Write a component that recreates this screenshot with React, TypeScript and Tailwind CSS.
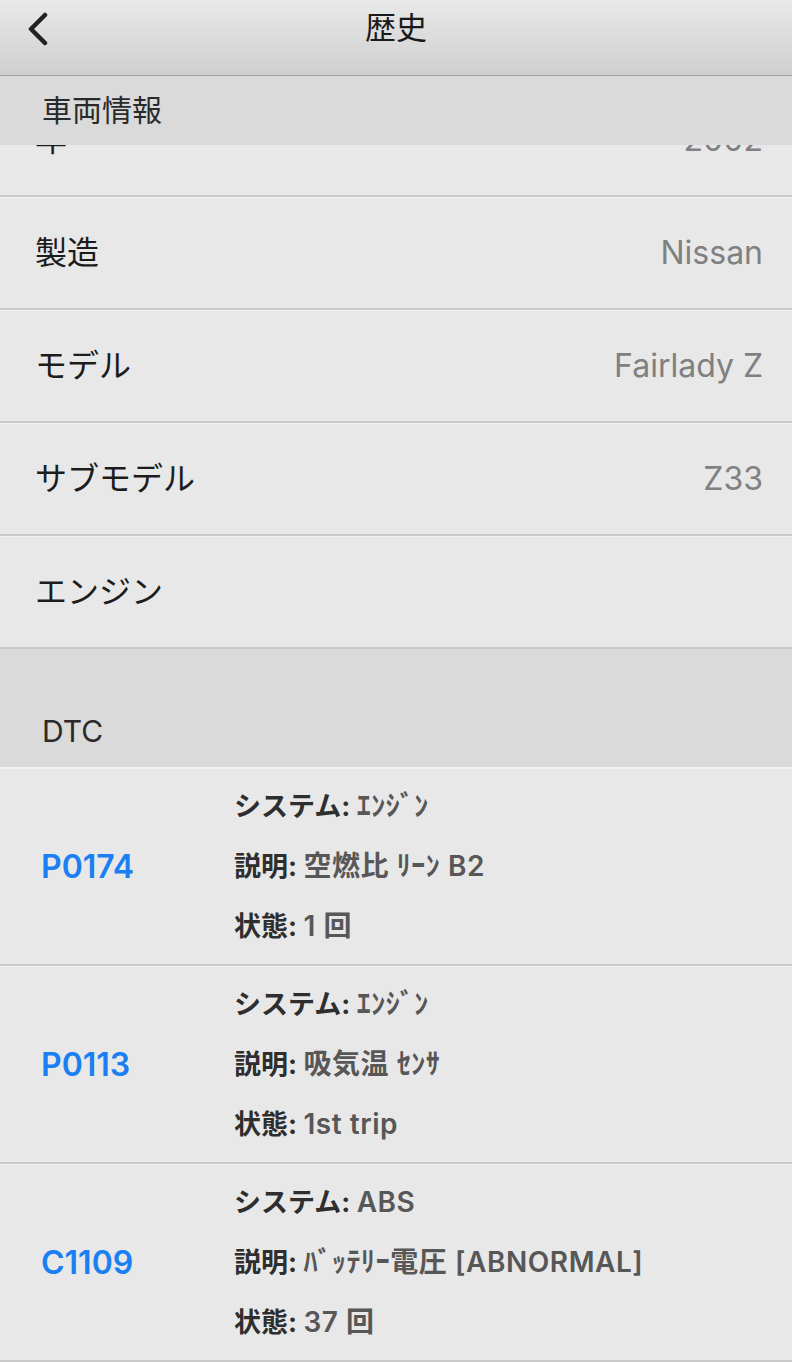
import React from "react";

const FONT = { fontFamily: 'Inter, "Noto Sans CJK JP", sans-serif' };

function InfoRow({ label, value }: { label: string; value?: string }) {
  return (
    <div className="flex h-[110px] items-center justify-between border-t border-t-[#f3f3f3] border-b-2 border-b-[#c9c9c9] bg-[#e8e8e8] box-content pl-[35px] pr-[29px]">
      <span className="text-[32px] text-[#1c1c1c]">{label}</span>
      {value && <span className="text-[32px] text-[#808080]">{value}</span>}
    </div>
  );
}

function DtcRow({ code, system, desc, status }: { code: string; system: string; desc: string; status: string }) {
  return (
    <div className="flex h-[195px] items-center border-t border-t-[#f3f3f3] border-b-2 border-b-[#c9c9c9] bg-[#e8e8e8] box-content">
      <div className="w-[234px] pl-[41px] text-[32px] font-semibold text-[#1a7ff2]">{code}</div>
      <div className="flex flex-col gap-[23px] text-[27px] leading-[37px] font-bold">
        <div>
          <span className="text-[#2e2e2e]">システム:</span>{" "}
          <span className="text-[28px] font-semibold tracking-[0.02em] text-[#575757]">{system}</span>
        </div>
        <div>
          <span className="text-[#2e2e2e]">説明:</span>{" "}
          <span className="text-[28px] font-semibold tracking-[0.02em] text-[#575757]">{desc}</span>
        </div>
        <div>
          <span className="text-[#2e2e2e]">状態:</span>{" "}
          <span className="text-[28px] font-semibold tracking-[0.02em] text-[#575757]">{status}</span>
        </div>
      </div>
    </div>
  );
}

export default function App() {
  return (
    <div className="w-[792px] h-[1362px] overflow-hidden bg-[#e8e8e8]" style={FONT}>
      <div className="relative flex h-[75px] items-start justify-center border-b border-b-[#a3a3a3] bg-gradient-to-b from-[#e9e9e9] to-[#cfcfcf] box-content">
        <svg className="absolute left-[26px] top-[12px]" width="24" height="34" viewBox="0 0 24 34" fill="none">
          <path d="M19 3 L5 17 L19 31" stroke="#222" strokeWidth="4.5" strokeLinecap="round" strokeLinejoin="round" />
        </svg>
        <span className="mt-[10px] text-[31px] leading-[36px] text-[#1a1a1a]">歴史</span>
      </div>
      <div className="flex h-[69px] items-center bg-[#dadada] pl-[42px]">
        <span className="text-[30px] text-[#2a2a2a]">車両情報</span>
      </div>
      <div className="flex h-[52px] flex-col justify-end overflow-hidden">
        <div className="flex h-[110px] shrink-0 items-center justify-between border-b-2 border-b-[#c9c9c9] bg-[#e8e8e8] box-content pl-[35px] pr-[29px]">
          <span className="text-[32px] text-[#1c1c1c]">年</span>
          <span className="text-[32px] text-[#808080]">2002</span>
        </div>
      </div>
      <InfoRow label="製造" value="Nissan" />
      <InfoRow label="モデル" value="Fairlady Z" />
      <InfoRow label="サブモデル" value="Z33" />
      <InfoRow label="エンジン" />
      <div className="flex h-[119px] items-end border-b border-b-[#f3f3f3] bg-[#dadada] pb-[13px] pl-[42px]">
        <span className="text-[30px] text-[#2a2a2a]">DTC</span>
      </div>
      <DtcRow code="P0174" system="ｴﾝｼﾞﾝ" desc="空燃比 ﾘｰﾝ B2" status="1 回" />
      <DtcRow code="P0113" system="ｴﾝｼﾞﾝ" desc="吸気温 ｾﾝｻ" status="1st trip" />
      <DtcRow code="C1109" system="ABS" desc="ﾊﾞｯﾃﾘｰ電圧 [ABNORMAL]" status="37 回" />
    </div>
  );
}
